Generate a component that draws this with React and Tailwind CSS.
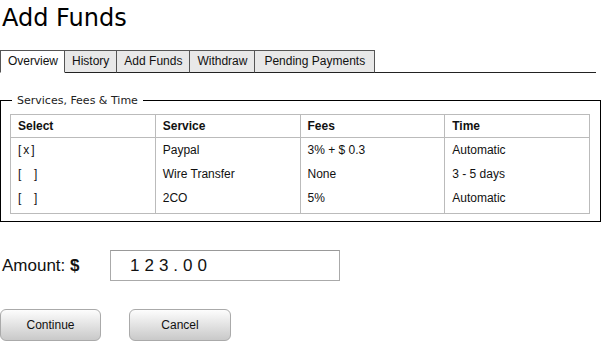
import React, { useState } from 'react';

const tabs = ['Overview', 'History', 'Add Funds', 'Withdraw', 'Pending Payments'];

const services = [
  { sel: '[x]', name: 'Paypal', fees: '3% + $ 0.3', time: 'Automatic' },
  { sel: '[  ]', name: 'Wire Transfer', fees: 'None', time: '3 - 5 days' },
  { sel: '[  ]', name: '2CO', fees: '5%', time: 'Automatic' },
];

export default function App() {
  const [active, setActive] = useState('Overview');
  const [amount, setAmount] = useState('123.00');

  return (
    <div className="w-[601px] h-[341px] bg-white text-black overflow-hidden font-['Liberation_Sans',Arial,sans-serif]">
      <h1 className="h-[50px] pt-[4px] pl-[2px] text-[24px] leading-[28px] font-normal font-['DejaVu_Sans',sans-serif]">
        Add Funds
      </h1>

      {/* tab strip */}
      <div className="flex items-end h-[23px]">
        {tabs.map((t, i) => (
          <button
            key={t}
            onClick={() => setActive(t)}
            className={`h-[23px] ${i === 0 ? 'pl-[7px] pr-[6px] border-l' : i === 4 ? 'px-[9px]' : 'px-[7px]'} text-[12px] leading-[21px] text-[#111] border-t border-r border-[#555] ${
              active === t ? 'bg-white border-b border-b-white' : 'bg-[#e8e8e8] border-b border-b-[#222]'
            }`}
          >
            {t}
          </button>
        ))}
        <div className="flex-1 mr-[5px] border-b border-[#222]" />
      </div>

      {/* services fieldset */}
      <fieldset className="mt-[21px] border border-black pt-[7px] pb-[7px] pl-[9px] pr-[10px]">
        <legend className="ml-[2px] px-[5px] text-[11px] leading-[13px] text-[#222] font-['DejaVu_Sans',sans-serif]">
          Services, Fees &amp; Time
        </legend>
        <table className="w-full table-fixed border-collapse border border-[#bbb] text-[12px] leading-[14px] text-[#111]">
          <thead>
            <tr className="border-b border-[#bbb]">
              {['Select', 'Service', 'Fees', 'Time'].map((h) => (
                <th key={h} className="text-left font-bold pl-[7px] py-[4px] border-l border-[#bbb]">
                  {h}
                </th>
              ))}
            </tr>
          </thead>
          <tbody>
            {services.map((s, i) => {
              const pad = i === services.length - 1 ? 'pt-[5px] pb-[8px]' : 'py-[5px]';
              return (
                <tr key={s.name}>
                  <td className={`pl-[7px] ${pad} border-l border-[#bbb] whitespace-pre tracking-[2px]`}>{s.sel}</td>
                  <td className={`pl-[7px] ${pad} border-l border-[#bbb]`}>{s.name}</td>
                  <td className={`pl-[7px] ${pad} border-l border-[#bbb]`}>{s.fees}</td>
                  <td className={`pl-[7px] ${pad} border-l border-[#bbb]`}>{s.time}</td>
                </tr>
              );
            })}
          </tbody>
        </table>
      </fieldset>

      {/* amount */}
      <div className="flex items-center mt-[28px] h-[31px]">
        <label className="w-[110px] pl-[2px] text-[17px] text-[#111]">
          Amount: <span className="font-bold">$</span>
        </label>
        <input
          value={amount}
          onChange={(e) => setAmount(e.target.value)}
          className="w-[230px] h-[31px] border border-[#aaa] border-t-[#999] pl-[19px] text-[17px] tracking-[5px] text-[#111] outline-none"
        />
      </div>

      {/* actions */}
      <div className="flex gap-[28px] mt-[28px]">
        <button className="w-[101px] h-[32px] rounded-[6px] border border-[#aaa] bg-gradient-to-b from-[#fdfdfd] to-[#c9c9c9] text-[12px] text-[#111]">
          Continue
        </button>
        <button className="w-[102px] h-[32px] rounded-[6px] border border-[#aaa] bg-gradient-to-b from-[#fdfdfd] to-[#c9c9c9] text-[12px] text-[#111]">
          Cancel
        </button>
      </div>
    </div>
  );
}
